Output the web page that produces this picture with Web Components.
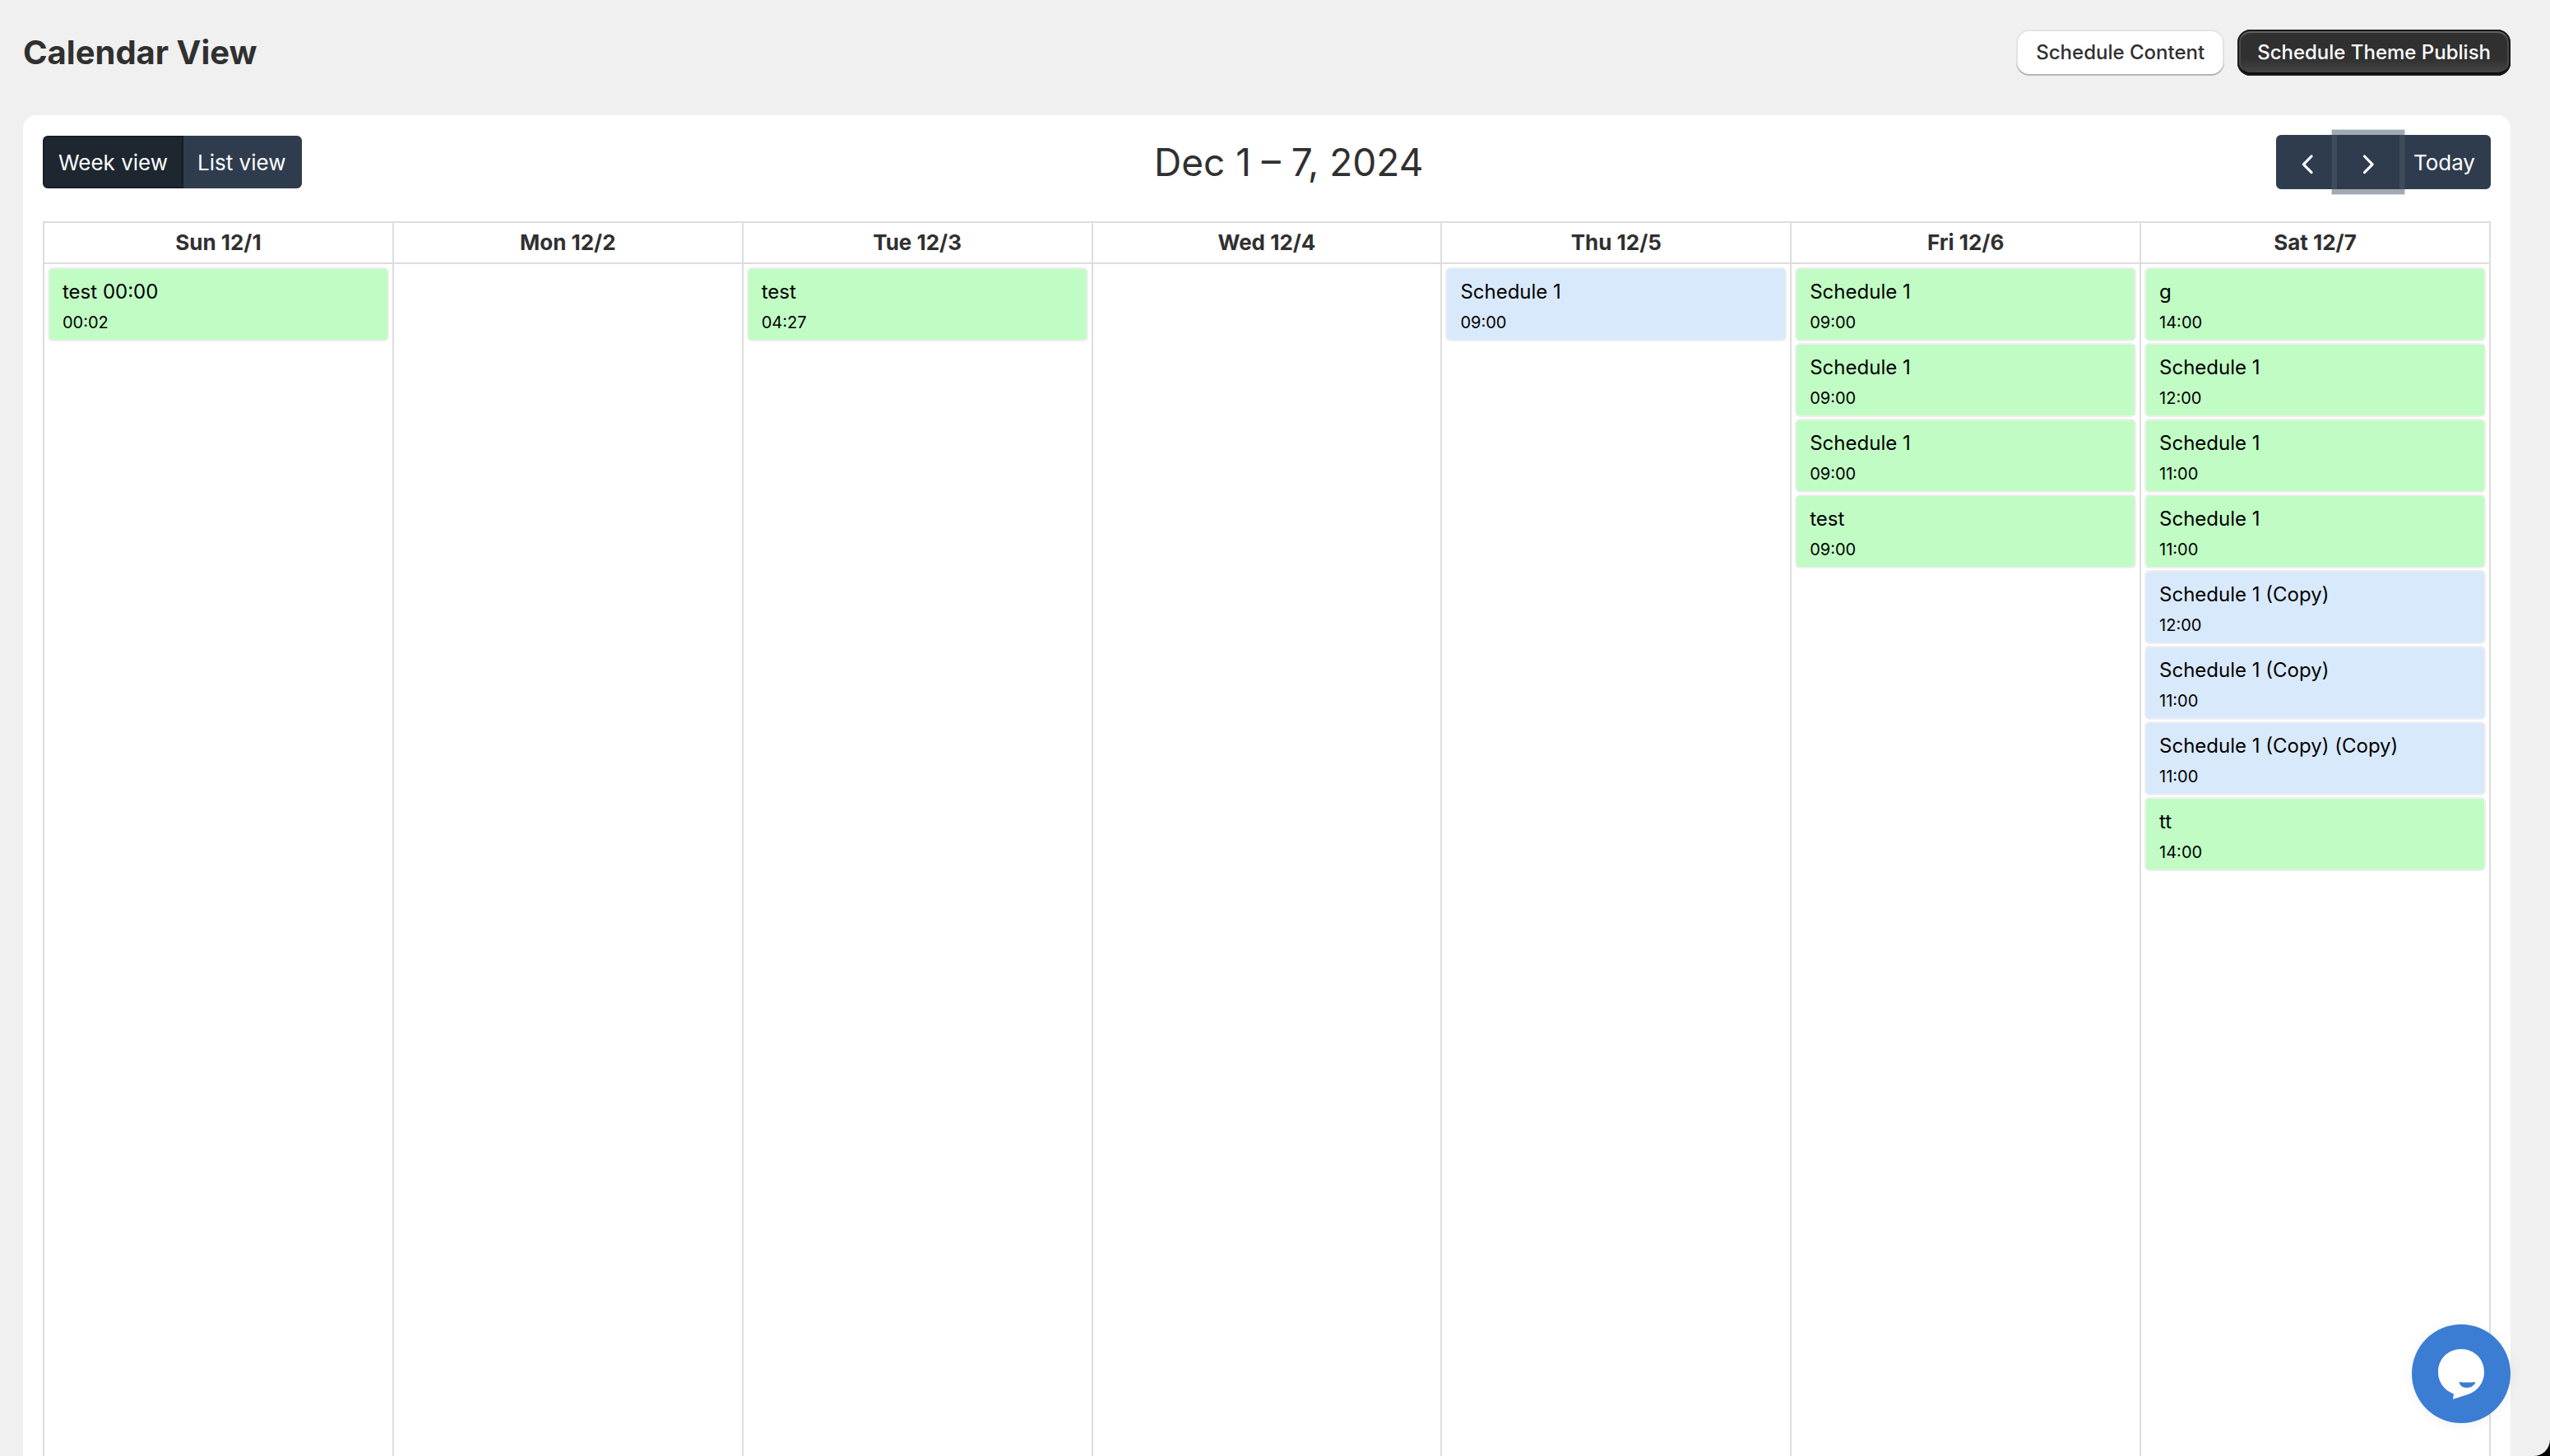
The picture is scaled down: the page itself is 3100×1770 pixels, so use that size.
<!DOCTYPE html>
<html lang="en">
<head>
<meta charset="utf-8">
<title>Calendar View</title>
<style>
  html {
    background: #000;
  }

  body {
    margin: 0;
    font-family: Inter, "Liberation Sans", sans-serif;
    font-size: 26px;
    color: #303030;
  }
</style>
</head>
<body>
<calendar-page>
  <page-header slot="header" heading="Calendar View">
    <action-button label="Schedule Content"></action-button>
    <action-button label="Schedule Theme Publish" variant="primary"></action-button>
  </page-header>
  <calendar-toolbar heading="Dec 1 – 7, 2024"></calendar-toolbar>
  <calendar-week></calendar-week>
  <chat-launcher slot="overlay"></chat-launcher>
</calendar-page>

<script>
/**
 * <calendar-page> - Page shell: header, white card, floating overlay
 */
class CalendarPage extends HTMLElement {
  constructor() {
    super();
    this.attachShadow({ mode: 'open' });
  }

  connectedCallback() {
    this.shadowRoot.innerHTML = `
      <style>
        :host {
          display: flex;
          flex-direction: column;
          box-sizing: border-box;
          height: 100vh;
          padding: 36px 48px 0 28px;
          gap: 48px;
          background: #f0f0f0;
          border-bottom-right-radius: 20px;
          overflow: hidden;
        }

        .card {
          flex: 1;
          min-height: 0;
          display: flex;
          flex-direction: column;
          gap: 39px;
          padding: 24px 24px 0;
          background: #fff;
          border-radius: 16px 16px 0 0;
        }
      </style>

      <slot name="header"></slot>
      <main class="card"><slot></slot></main>
      <slot name="overlay"></slot>
    `;
  }
}

/**
 * <page-header> - Page heading with its actions in the default slot
 */
class PageHeader extends HTMLElement {
  constructor() {
    super();
    this.attachShadow({ mode: 'open' });
  }

  connectedCallback() {
    this.shadowRoot.innerHTML = `
      <style>
        :host {
          display: flex;
          align-items: center;
          justify-content: space-between;
        }

        h1 {
          margin: 0;
          font-size: 40px;
          line-height: 56px;
          font-weight: 650;
        }

        .actions {
          display: flex;
          gap: 16px;
        }
      </style>

      <h1>${this.getAttribute('heading')}</h1>
      <div class="actions"><slot></slot></div>
    `;
  }
}

/**
 * <action-button> - Page action
 *
 * Usage:
 * <action-button label="Save" variant="primary"></action-button>
 */
class ActionButton extends HTMLElement {
  constructor() {
    super();
    this.attachShadow({ mode: 'open' });
  }

  connectedCallback() {
    const variant = this.getAttribute('variant') || 'secondary';

    this.shadowRoot.innerHTML = `
      <style>
        :host {
          display: block;
        }

        button {
          display: block;
          height: 56px;
          padding: 0 24px;
          border: 0;
          border-radius: 16px;
          font: 550 24px/32px Inter, "Liberation Sans", sans-serif;
          white-space: nowrap;
          cursor: pointer;
        }

        .secondary {
          background: #fff;
          color: #303030;
          box-shadow: inset 0 -2px 0 #b5b5b5, inset 0 0 0 2px #e3e3e3;
        }

        .primary {
          background: linear-gradient(180deg, #303030 63%, #4a4a4a 100%);
          color: #fff;
          box-shadow: inset 0 0 0 2px #1a1a1a, inset 0 -4px 0 #0d0d0d, inset 0 4px 0 #616161, inset 0 0 0 4px #4a4a4a;
        }
      </style>

      <button type="button" class="${variant}">${this.getAttribute('label')}</button>
    `;
  }
}

/**
 * <calendar-toolbar> - View switch, range heading and week navigation
 *
 * Events:
 * - 'view-change': { detail: { view } }
 * - 'navigate': { detail: { action } }
 */
class CalendarToolbar extends HTMLElement {
  constructor() {
    super();
    this.attachShadow({ mode: 'open' });
  }

  connectedCallback() {
    this.shadowRoot.innerHTML = `
      <style>
        :host {
          display: flex;
          align-items: center;
          justify-content: space-between;
          height: 66px;
        }

        h2 {
          margin: 0;
          font-size: 46px;
          line-height: 56px;
          font-weight: 400;
        }

        .group {
          display: flex;
        }

        button {
          display: flex;
          align-items: center;
          height: 64px;
          padding: 2px 17px 0;
          border: 2px solid #2f3c4e;
          background: #2f3c4e;
          color: #fff;
          font: 400 26px/40px Inter, "Liberation Sans", sans-serif;
          cursor: pointer;
        }

        button:first-child {
          border-radius: 6px 0 0 6px;
        }

        button:last-child {
          border-radius: 0 6px 6px 0;
        }

        button + button {
          margin-left: -2px;
        }

        button.active {
          background: #1e2730;
          border-color: #151e27;
          z-index: 1;
        }

        .nav button {
          height: 66px;
        }

        .nav svg {
          display: block;
          width: 38px;
          height: 38px;
        }

        button.focused {
          z-index: 1;
          box-shadow: 0 0 0 6px rgba(76, 91, 106, 0.4), 0 0 0 7px rgba(76, 91, 106, 0.2);
        }
      </style>

      <div class="group views" role="group" aria-label="View">
        <button type="button" data-view="week" class="active" aria-pressed="true">Week view</button>
        <button type="button" data-view="list" aria-pressed="false">List view</button>
      </div>
      <h2>${this.getAttribute('heading')}</h2>
      <div class="group nav" role="group" aria-label="Navigation">
        <button type="button" data-action="prev" aria-label="Previous week">
          <svg viewBox="0 0 38 38" fill="none" stroke="#fff" stroke-width="3.2" stroke-linecap="round" stroke-linejoin="round">
            <path d="M24 11l-9.600 9.800 9.600 9.800" />
          </svg>
        </button>
        <button type="button" data-action="next" class="focused" aria-label="Next week">
          <svg viewBox="0 0 38 38" fill="none" stroke="#fff" stroke-width="3.2" stroke-linecap="round" stroke-linejoin="round">
            <path d="M14.500 11l9.600 9.800-9.600 9.800" />
          </svg>
        </button>
        <button type="button" data-action="today">Today</button>
      </div>
    `;

    this._views = [...this.shadowRoot.querySelectorAll('.views button')];
    this._views.forEach(b => b.addEventListener('click', () => this._onView(b)));
    this.shadowRoot.querySelectorAll('.nav button').forEach(b => {
      b.addEventListener('click', () => this._emit('navigate', { action: b.dataset.action }));
    });
  }

  _onView(button) {
    this._views.forEach(b => {
      b.classList.toggle('active', b === button);
      b.setAttribute('aria-pressed', b === button);
    });
    this._emit('view-change', { view: button.dataset.view });
  }

  _emit(name, detail) {
    this.dispatchEvent(new CustomEvent(name, { bubbles: true, composed: true, detail }));
  }
}

/**
 * <calendar-event> - One scheduled item
 *
 * Usage:
 * <calendar-event name="test" time="09:00" kind="theme"></calendar-event>
 */
class CalendarEvent extends HTMLElement {
  constructor() {
    super();
    this.attachShadow({ mode: 'open' });
  }

  connectedCallback() {
    this.shadowRoot.innerHTML = `
      <style>
        :host {
          display: block;
          --event-bg: #c1fcc4;
        }

        :host([kind="theme"]) {
          --event-bg: #d9e9fc;
        }

        a {
          display: block;
          padding: 10px 16px 2px;
          border: 2px solid #efefef;
          border-radius: 6px;
          background: var(--event-bg);
          color: #000;
          text-decoration: none;
          white-space: nowrap;
          overflow: hidden;
        }

        .name {
          display: block;
          font-size: 24px;
          line-height: 36px;
        }

        time {
          display: block;
          font-size: 20px;
          line-height: 38px;
        }
      </style>

      <a href="#">
        <span class="name">${this.getAttribute('name')}</span>
        <time>${this.getAttribute('time')}</time>
      </a>
    `;
  }
}

const WEEK = [
  { day: 'Sun 12/1', events: [['test 00:00', '00:02', 'content']] },
  { day: 'Mon 12/2', events: [] },
  { day: 'Tue 12/3', events: [['test', '04:27', 'content']] },
  { day: 'Wed 12/4', events: [] },
  { day: 'Thu 12/5', events: [['Schedule 1', '09:00', 'theme']] },
  { day: 'Fri 12/6', events: [
    ['Schedule 1', '09:00', 'content'],
    ['Schedule 1', '09:00', 'content'],
    ['Schedule 1', '09:00', 'content'],
    ['test', '09:00', 'content']
  ] },
  { day: 'Sat 12/7', events: [
    ['g', '14:00', 'content'],
    ['Schedule 1', '12:00', 'content'],
    ['Schedule 1', '11:00', 'content'],
    ['Schedule 1', '11:00', 'content'],
    ['Schedule 1 (Copy)', '12:00', 'theme'],
    ['Schedule 1 (Copy)', '11:00', 'theme'],
    ['Schedule 1 (Copy) (Copy)', '11:00', 'theme'],
    ['tt', '14:00', 'content']
  ] }
];

/**
 * <calendar-week> - Seven day columns, fills the height it is given
 */
class CalendarWeek extends HTMLElement {
  constructor() {
    super();
    this.attachShadow({ mode: 'open' });
  }

  connectedCallback() {
    const heads = WEEK.map(d => `<th scope="col">${d.day}</th>`).join('');
    const cells = WEEK.map(d => `<td><div class="events">${d.events.map(([name, time, kind]) =>
      `<calendar-event name="${name}" time="${time}" kind="${kind}"></calendar-event>`).join('')}</div></td>`).join('');

    this.shadowRoot.innerHTML = `
      <style>
        :host {
          display: block;
          flex: 1;
          min-height: 0;
        }

        table {
          width: 100%;
          height: 100%;
          table-layout: fixed;
          border-collapse: collapse;
        }

        th, td {
          padding: 0;
          border: 2px solid #ddd;
        }

        th {
          height: 48px;
          font-size: 26px;
          line-height: 40px;
          font-weight: 700;
        }

        td {
          height: 100%;
          vertical-align: top;
          border-bottom: 0;
        }

        .events {
          display: flex;
          flex-direction: column;
          gap: 2px;
          padding: 4px;
        }
      </style>

      <table>
        <thead><tr>${heads}</tr></thead>
        <tbody><tr>${cells}</tr></tbody>
      </table>
    `;
  }
}

/**
 * <chat-launcher> - Round chat button floating over the page
 */
class ChatLauncher extends HTMLElement {
  constructor() {
    super();
    this.attachShadow({ mode: 'open' });
  }

  connectedCallback() {
    this.shadowRoot.innerHTML = `
      <style>
        :host {
          position: fixed;
          right: 48px;
          bottom: 40px;
        }

        button {
          display: block;
          width: 120px;
          height: 120px;
          padding: 0;
          border: 0;
          border-radius: 50%;
          background: #3b7dd3;
          box-shadow: 0 2px 16px rgba(0, 0, 0, 0.06);
          cursor: pointer;
        }

        svg {
          display: block;
        }
      </style>

      <button type="button" aria-label="Open chat">
        <svg viewBox="0 0 120 120" width="120" height="120">
          <path fill="#fff" d="M60 30C44 30 32 42 32 58C32 70 39 80 51 84.500L50 91L70 84.500C81 80 88 70 88 58C88 42 76 30 60 30Z" />
          <path fill="#3b7dd3" d="M57.500 70Q67 71 77 70Q77 72 75.500 73.500Q72 77 67 77Q60 77 58 72Z" />
        </svg>
      </button>
    `;
  }
}

customElements.define('action-button', ActionButton);
customElements.define('page-header', PageHeader);
customElements.define('calendar-toolbar', CalendarToolbar);
customElements.define('calendar-event', CalendarEvent);
customElements.define('calendar-week', CalendarWeek);
customElements.define('chat-launcher', ChatLauncher);
customElements.define('calendar-page', CalendarPage);
</script>
</body>
</html>
